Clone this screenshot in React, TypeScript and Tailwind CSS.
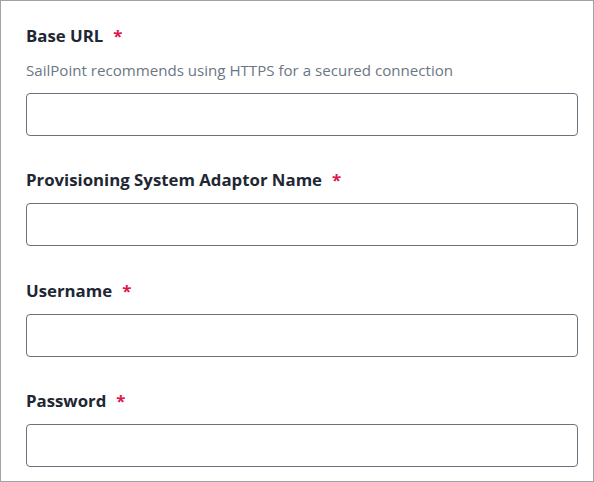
import React from 'react';

const fields = [
  { label: 'Provisioning System Adaptor Name' },
  { label: 'Username' },
  { label: 'Password' },
];

const Label = ({ text }: { text: string }) => (
  <label className="flex items-center text-[16.8px] leading-[20px] font-bold text-[#1e2733]">
    {text}
    <span className="ml-[10px] text-[#e0144c]">*</span>
  </label>
);

const Input = () => (
  <input className="block w-full h-[43px] rounded-[4px] border border-[#69727d] bg-white outline-none" />
);

export default function App() {
  return (
    <div className="w-[594px] h-[482px] bg-white" style={{ fontFamily: '"Open Sans", "Lato", sans-serif' }}>
      <div className="h-full border border-[#a3a3a3] pt-[25px] px-[15px] pl-[25px]">
        <div className="flex flex-col gap-[34.4px]">
          <div className="flex flex-col">
            <Label text="Base URL" />
            <p className="mt-[14px] text-[15.1px] leading-[20px] text-[#6b7683]">
              SailPoint recommends using HTTPS for a secured connection
            </p>
            <div className="mt-[13px]">
              <Input />
            </div>
          </div>
          {fields.map((f) => (
            <div key={f.label} className="flex flex-col gap-[13px]">
              <Label text={f.label} />
              <Input />
            </div>
          ))}
        </div>
      </div>
    </div>
  );
}
